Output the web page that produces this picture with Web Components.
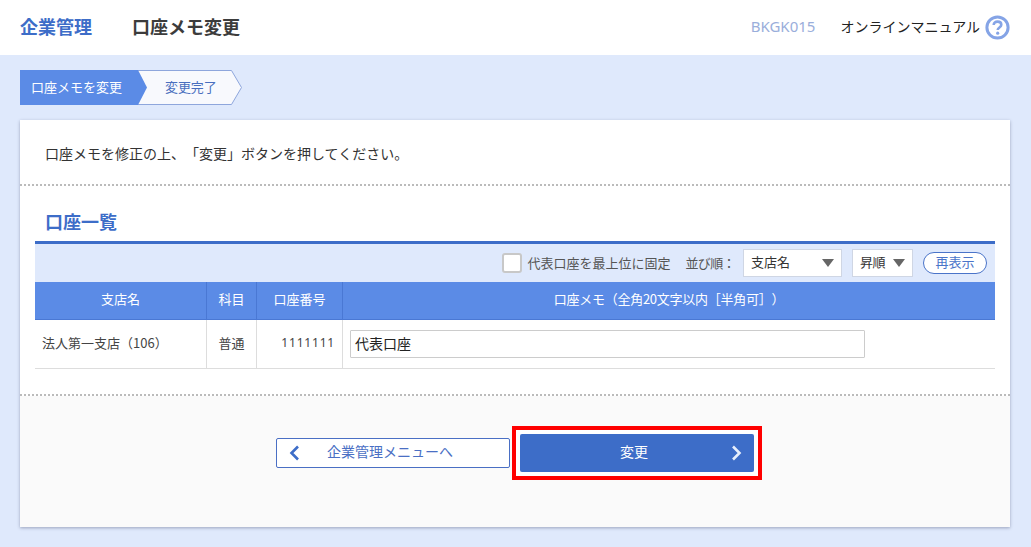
<!DOCTYPE html>
<html lang="ja">
<head>
<meta charset="utf-8">
<title>口座メモ変更</title>
<style>
html,body{margin:0;padding:0}
body{background:#dfe9fc;font-family:"Noto Sans CJK JP","Noto Sans",sans-serif;color:#333;font-size:13px;text-spacing-trim:space-all}
</style>
</head>
<body>
<app-header></app-header>
<page-main>
  <step-bar></step-bar>
  <main-card>
    <p slot="lead">口座メモを修正の上、「変更」ボタンを押してください。</p>
    <account-section slot="body"></account-section>
    <action-bar slot="footer"></action-bar>
  </main-card>
</page-main>
<script>
const FONT='"Noto Sans CJK JP","Noto Sans",sans-serif';
function def(name,html){
  customElements.define(name,class extends HTMLElement{
    constructor(){super();this.attachShadow({mode:'open'}).innerHTML=html;}
  });
}
def('app-header',`<style>
:host{display:flex;align-items:center;height:55px;background:#fff;padding:0 21px 0 20px;box-sizing:border-box;font-family:${FONT}}
.sys,.ttl,.id,.man{padding-bottom:4px}
.sys{font-size:18px;font-weight:700;color:#3d6dc8;width:112px;white-space:nowrap}
.ttl{font-size:18px;font-weight:700;color:#3c3c3c;flex:1;white-space:nowrap}
.id{font-size:15px;color:#9aaedb;margin-right:25px;font-family:"Noto Sans",sans-serif}
.man{font-size:14px;color:#222;margin-right:5px;white-space:nowrap}
svg{display:block}
</style>
<div class="sys">企業管理</div><div class="ttl">口座メモ変更</div>
<div class="id">BKGK015</div><div class="man">オンラインマニュアル</div>
<svg width="25" height="25" viewBox="0 0 25 25"><circle cx="12.5" cy="12.5" r="10.6" fill="#fff" stroke="#85a4e6" stroke-width="3"/><path d="M8.7 10c0-2.2 1.7-3.4 3.8-3.4s3.8 1.2 3.8 3.1c0 2.8-3.6 2.7-3.6 5.3" fill="none" stroke="#85a4e6" stroke-width="2.6"/><circle cx="12.7" cy="18.2" r="1.6" fill="#85a4e6"/></svg>`);
def('page-main',`<style>:host{display:block;padding:15px 21px 20px 20px}</style><slot></slot>`);
def('step-bar',`<style>
:host{display:block;position:relative;width:222px;height:35px;font-family:${FONT};font-size:13px;margin-bottom:15px}
svg{position:absolute;inset:0}
.r{position:relative;display:flex;height:33px;align-items:center}
.a{color:#fff;width:118px;padding-left:11px;box-sizing:border-box;white-space:nowrap}
.b{color:#4a6fbe;padding-left:27px;letter-spacing:-.1px}
</style>
<svg width="222" height="35" viewBox="0 0 222 35"><path d="M115.5 .5H211.5L221.5 17.5L211.5 34.5H115.5L125.5 17.5Z" fill="#f8f9fd" stroke="#8ea6dc"/><path d="M0 0H118L127 17.5L118 35H0Z" fill="#5b8be6"/></svg>
<div class="r"><div class="a">口座メモを変更</div><div class="b">変更完了</div></div>`);
def('main-card',`<style>
:host{background:#fff;box-shadow:0 1px 3px rgba(70,80,110,.45);height:407px;font-family:${FONT};display:flex;flex-direction:column}
.lead{height:64px;display:flex;align-items:center;padding:0 25px;font-size:14px;color:#333;border-bottom:2px dotted #bbb;flex:none}
::slotted(p){margin:0;padding-top:1px}
.body{padding:0 15px;flex:none;height:210px;box-sizing:border-box;border-bottom:2px dotted #bbb}
.foot{flex:1;background:#fafafa}
</style>
<div class="lead"><slot name="lead"></slot></div>
<div class="body"><slot name="body"></slot></div>
<div class="foot"><slot name="footer"></slot></div>`);
def('account-section',`<style>
:host{display:block;font-family:${FONT};font-size:13px;text-spacing-trim:space-all}
h2{margin:0;height:55px;box-sizing:border-box;padding:23px 0 0 10px;font-size:18px;line-height:25px;font-weight:700;color:#3d6dc8}
.bar{border-top:3px solid #3d6dc8;background:#dfe9fc;height:41px;box-sizing:border-box;display:flex;align-items:center;justify-content:flex-end;padding-right:8px}
.cb{width:20px;height:20px;box-sizing:border-box;background:#fff;border:2px solid #c8c8c8;border-radius:3px;margin-right:5px}
.lb{color:#555;white-space:nowrap;margin-right:15px;padding-bottom:2px}
.o{color:#555;margin-right:8px;white-space:nowrap;letter-spacing:-.6px;padding-bottom:2px}
.sel{display:flex;align-items:center;justify-content:space-between;background:#fff;border:1px solid #cfd6e4;box-sizing:border-box;height:28px;padding:0 7px;color:#333;margin-right:10px;white-space:nowrap}
.sel span{padding-bottom:3px}
.sel i{width:0;height:0;border-left:6px solid transparent;border-right:6px solid transparent;border-top:8px solid #666}
.s1{width:99px}.s2{width:61px}.s2 span{letter-spacing:-.5px}
.re{width:64px;height:22px;box-sizing:border-box;border:1px solid #4a74c9;border-radius:11px;background:#fff;color:#4a74c9;text-align:center;line-height:17px}
.g{display:grid;grid-template-columns:172px 50px 86px 652px}
.h{background:#5b8be6;color:#fff;height:38px;display:flex;align-items:center;justify-content:center;border-right:1px solid #4a78d4;border-bottom:1px solid #4a78d4;box-sizing:border-box;font-size:13px;padding-bottom:4px}
.h4{border-right:0;letter-spacing:-.25px}
.c{height:49px;border-right:1px solid #ddd;border-bottom:1px solid #ddd;box-sizing:border-box;display:flex;align-items:center;color:#444;font-size:13px;padding-bottom:3px}
.c1{padding-left:7px}.c2{justify-content:center}.c3{justify-content:flex-end;padding-right:7px;letter-spacing:.8px;font-size:12px;font-family:"Noto Sans",sans-serif}
.c4{padding-left:7px;padding-bottom:0;border-right:0}
.inp{width:515px;height:28px;box-sizing:border-box;border:1px solid #ccc;border-radius:1px;padding:0 4px 2px;display:flex;align-items:center;font-size:14px;color:#222;background:#fff}
</style>
<h2>口座一覧</h2>
<div class="bar"><div class="cb"></div><div class="lb">代表口座を最上位に固定</div><div class="o">並び順：</div>
<div class="sel s1"><span>支店名</span><i></i></div><div class="sel s2"><span>昇順</span><i></i></div><div class="re">再表示</div></div>
<div class="g">
<div class="h">支店名</div><div class="h">科目</div><div class="h">口座番号</div><div class="h h4">口座メモ（全角20文字以内［半角可］）</div>
<div class="c c1">法人第一支店（106）</div><div class="c c2">普通</div><div class="c c3">1111111</div><div class="c c4"><div class="inp" role="textbox">代表口座</div></div>
</div>`);
def('action-bar',`<style>
:host{display:flex;justify-content:center;align-items:center;gap:10px;padding-top:38px;font-family:${FONT};font-size:14px}
.btn{display:flex;align-items:center;box-sizing:border-box;width:234px;position:relative}
.btn span{padding-bottom:5px}
.back{height:30px;background:#fff;border:1px solid #4a6fc4;border-radius:2px;color:#4a6fc4;padding-left:12px}
.back span{margin-left:27px}
.go{height:38px;background:#3d6dc8;color:#fff;border-radius:2px;justify-content:center;padding-right:6px}
.go::after{content:"";position:absolute;inset:-8px;border:4px solid #f00;box-shadow:inset 0 0 0 4px #fff}
.go svg{position:absolute;right:12px;top:11px}
</style>
<div class="btn back"><svg width="11" height="16" viewBox="0 0 11 16"><path d="M9 1.5L2.5 8L9 14.5" fill="none" stroke="#3d6dc8" stroke-width="2.6"/></svg><span>企業管理メニューへ</span></div>
<div class="btn go"><span>変更</span><svg width="11" height="16" viewBox="0 0 11 16"><path d="M2 1.5L8.5 8L2 14.5" fill="none" stroke="#e6eefc" stroke-width="2.6"/></svg></div>`);
</script>
</body>
</html>
